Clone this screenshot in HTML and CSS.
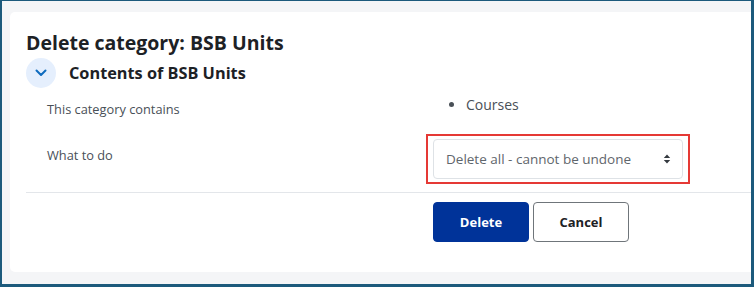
FILE: index.html
```html
<!DOCTYPE html>
<html lang="en">
<head>
    <meta charset="UTF-8">
    <meta name="viewport" content="width=device-width, initial-scale=1.0">
    <title>Delete category: BSB Units</title>
    <link rel="stylesheet" href="styles.css">
</head>
<body>

<div class="frame">
    <div class="card">
        <h2 class="page-title">Delete category: BSB Units</h2>

        <div class="section-head">
            <span class="toggle">
                <svg width="12" height="8" viewBox="0 0 12 8">
                    <path d="M1.5 1.5 L6 6 L10.5 1.5" fill="none" stroke="#0f6cbf" stroke-width="2" stroke-linecap="round" stroke-linejoin="round"/>
                </svg>
            </span>
            <h3>Contents of BSB Units</h3>
        </div>

        <form class="delete-form">
            <div class="form-row first">
                <label class="row-label">This category contains</label>
                <ul class="contents-list">
                    <li>Courses</li>
                </ul>
            </div>

            <div class="form-row second">
                <label class="row-label" for="action">What to do</label>
                <div class="highlight">
                    <div class="select">
                        <span id="action">Delete all - cannot be undone</span>
                        <svg width="8" height="10" viewBox="0 0 8 10">
                            <path d="M4 0.5 L7.2 4 L0.8 4 Z M4 9.5 L7.2 6 L0.8 6 Z" fill="#343a40"/>
                        </svg>
                    </div>
                </div>
            </div>

            <hr class="divider">

            <div class="buttons">
                <button type="button" class="btn btn-primary">Delete</button>
                <button type="button" class="btn btn-secondary">Cancel</button>
            </div>
        </form>
    </div>
</div>

</body>
</html>
```

FILE: styles.css
```css
body {
    margin: 0;
    font-family: "Open Sans", "Liberation Sans", sans-serif;
    color: #1d2125;
}

.frame {
    height: 287px;
    box-sizing: border-box;
    border-style: solid;
    border-color: #1c5a7c;
    border-width: 1px 3px 3px 2px;
    background-color: #f4f5f7;
    padding: 11px 0 12px 8px;
    overflow: hidden;
}

.card {
    height: 100%;
    box-sizing: border-box;
    background-color: #fff;
    border-radius: 5px 0 0 5px;
    padding: 17px 0 0 16px;
}

.page-title {
    margin: 0;
    font-size: 19.5px;
    line-height: 27px;
    font-weight: 700;
}

.section-head {
    display: flex;
    align-items: center;
    gap: 13px;
    margin-top: 2px;
}

.toggle {
    width: 30px;
    height: 30px;
    border-radius: 50%;
    background-color: #e5effd;
    display: flex;
    align-items: center;
    justify-content: center;
}

.section-head h3 {
    margin: 0;
    font-size: 16.3px;
    font-weight: 700;
}

.delete-form {
    margin-top: 6px;
}

.form-row {
    display: grid;
    grid-template-columns: 386px auto;
    padding-left: 21px;
}

.row-label {
    font-size: 12.8px;
    line-height: 20px;
    color: #495057;
}

.first .row-label {
    padding-top: 5px;
}

.contents-list {
    margin: 0;
    padding-left: 33px;
    font-size: 14px;
    line-height: 21px;
    color: #495057;
}

.second {
    margin-top: 15px;
}

.second .row-label {
    padding-top: 11px;
}

.highlight {
    width: 250px;
    border: 2px solid #e53935;
    padding: 3px 5px;
    margin-left: -7px;
}

.select {
    height: 40px;
    box-sizing: border-box;
    border: 1px solid #dee2e6;
    border-radius: 4px;
    display: flex;
    align-items: center;
    justify-content: space-between;
    padding: 0 11px 0 12px;
    font-size: 13.5px;
    color: #5f666c;
}

.divider {
    margin: 8px 0 0 0;
    border: 0;
    border-top: 1px solid #e3e6ea;
}

.buttons {
    display: flex;
    gap: 4px;
    margin-top: 9px;
    padding-left: 407px;
}

.btn {
    width: 96px;
    height: 40px;
    border-radius: 4px;
    font-family: "Open Sans", "Liberation Sans", sans-serif;
    font-size: 13px;
    font-weight: 700;
    cursor: pointer;
}

.btn-primary {
    background-color: #003399;
    border: 1px solid #003399;
    color: #fff;
}

.btn-secondary {
    background-color: #fff;
    border: 1px solid #6f757a;
    color: #1d2125;
}
```
